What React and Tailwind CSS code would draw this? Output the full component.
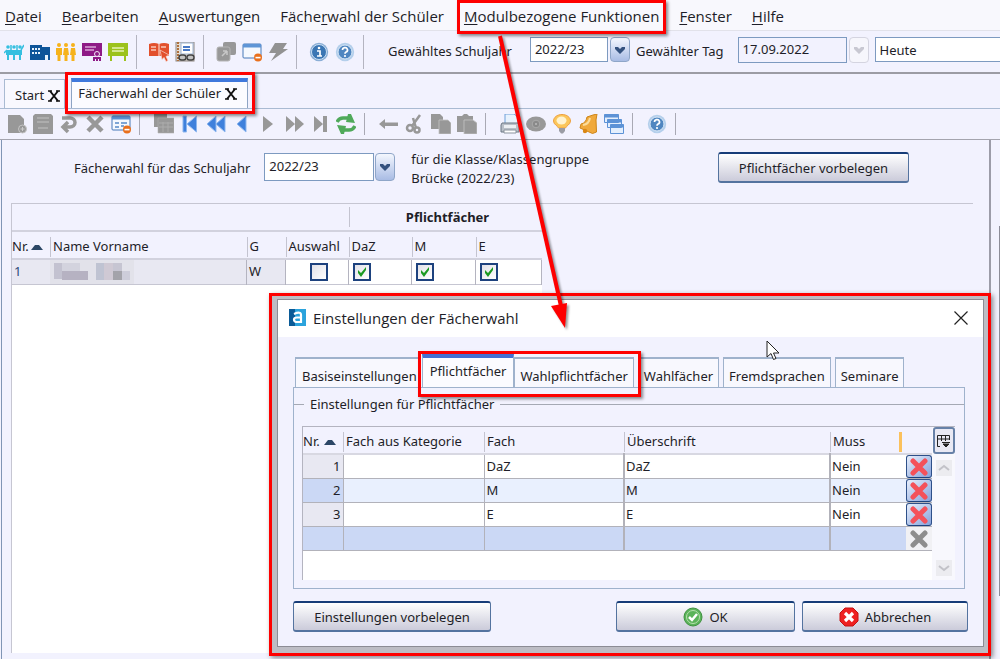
import React, { useState } from "react";

const Icon = ({ children }) => (
  <svg viewBox="0 0 20 20" className="size-5 shrink-0" aria-hidden="true">
    {children}
  </svg>
);

const ToolButton = ({ label, children }) => (
  <button type="button" aria-label={label} className="size-5 shrink-0">
    <Icon>{children}</Icon>
  </button>
);

const windowShape = (
  <g>
    <rect x="1" y="2" width="18" height="14" rx="1" fill="#f4f8fe" stroke="#4678b8" />
    <rect x="1" y="2" width="18" height="3.5" fill="#5f95d6" />
  </g>
);

const minusBadge = (
  <g>
    <circle cx="16" cy="15.5" r="4" fill="#e9701d" />
    <rect x="13.5" y="14.8" width="5" height="1.6" fill="#fff" />
  </g>
);

const helpShape = (
  <g>
    <circle cx="10" cy="10" r="9.2" fill="#b4cfeb" />
    <circle cx="10" cy="10" r="7" fill="#4f86c0" stroke="#d9e8f7" />
    <path d="M7.5 8a2.5 2.4 0 1 1 3.6 2.1q-1.1.6-1.1 1.7" fill="none" stroke="#fff" strokeWidth="1.7" />
    <circle cx="10" cy="14" r="1.1" fill="#fff" />
  </g>
);

const mainTools = [
  [
    ["Schüler", (
      <g fill="#35bfe0">
        <circle cx="4" cy="5" r="1.8" /><circle cx="10" cy="5" r="1.8" /><circle cx="16" cy="5" r="1.8" />
        <path d="M2 8h16v5h-1v5h-2v-5h-4v5H9v-5H5v5H3v-5H2z" />
        <path d="M0 11l3-3M7 8V3M13 8V3M17 8l3-5" stroke="#35bfe0" strokeWidth="1.5" />
      </g>
    )],
    ["Schule", (
      <g>
        <path d="M0 3h12v2h8v13H0z" fill="#0d5499" />
        <path d="M2 6h2v2H2zM5 6h2v2H5zM8 6h2v2H8zM2 10h2v2H2zM5 10h2v2H5zM8 10h2v2H8zM15 13h3v5h-3z" fill="#e6f1fb" />
      </g>
    )],
    ["Klassen", (
      <g fill="#f6b21b">
        <circle cx="3" cy="3" r="2" /><circle cx="10" cy="3" r="2" /><circle cx="17" cy="3" r="2" />
        <path d="M0 6h6v7H4.500v6h-3v-6H0zM8 6h4l1 7h-1.500v6h-3v-6H7zM15 6h4l1 7h-1.500v6h-3v-6H14z" />
      </g>
    )],
    ["Unterricht", (
      <g>
        <path d="M0 1h20v13H0z" fill="#8e1a86" />
        <path d="M3 5h11M3 8h9" stroke="#d9a5d6" strokeWidth="1.3" />
        <circle cx="15" cy="12" r="2.500" fill="#8e1a86" stroke="#f3e6f6" />
        <path d="M11 19v-4h8v4h-2v-2h-1v2h-2v-2h-1v2z" fill="#8e1a86" />
      </g>
    )],
    ["Leistung", (
      <g>
        <path d="M0 1h20v13H0z" fill="#9cc21c" />
        <path d="M4 6h12M4 9h12" stroke="#e6f2b6" strokeWidth="1.4" />
        <path d="M2 14h2v5H2zM16 14h2v5h-2z" fill="#9cc21c" />
      </g>
    )],
  ],
  [
    ["Katalog", (
      <g>
        <path d="M0 2q5-2 10 0 5-2 10 0v12H0z" fill="#e2502c" />
        <path d="M10 2v12M2 5h5M2 8h5M12 5h5" stroke="#f9c7b8" strokeWidth="1.3" />
        <path d="M11 8l9 5-3 1.500 2 4-2 1-2-4-2 2z" fill="#e2502c" stroke="#f8d8ce" strokeWidth=".7" />
      </g>
    )],
    ["Suche", (
      <g>
        <rect x="1" y="0" width="18" height="19" fill="#e4ded6" stroke="#8d8680" />
        <rect x="6" y="1" width="12" height="11" fill="#fff" stroke="#9cb2d2" />
        <path d="M8 5h7M8 8h7" stroke="#4878c5" strokeWidth="2" />
        <path d="M3 0v19" stroke="#b0703c" strokeWidth="2" strokeDasharray="2 1" />
        <rect x="4" y="13" width="7" height="5" rx="2.500" fill="#c4c4c4" stroke="#444" strokeWidth="1.400" />
        <rect x="12" y="13" width="7" height="5" rx="2.500" fill="#c4c4c4" stroke="#444" strokeWidth="1.400" />
      </g>
    )],
  ],
  [
    ["Ansichten", (
      <g fill="#989898">
        <rect x="7" y="0" width="13" height="13" rx="2" />
        <rect x="1" y="5" width="13" height="14" rx="2" stroke="#b4b4b4" />
        <path d="M6 14l5-5m0 0v4m0-4H7" stroke="#c8c8c8" strokeWidth="1.500" fill="none" />
      </g>
    )],
    ["Fenster schließen", <g>{windowShape}{minusBadge}</g>],
    ["Blitz", <path d="M7 1h12l-4 6h5L3 19l5-8H1z" fill="#929292" />],
  ],
  [
    ["Info", (
      <g>
        <circle cx="10" cy="10" r="9.200" fill="#8aaed6" />
        <circle cx="10" cy="10" r="7.500" fill="#3b76b4" stroke="#c9def2" />
        <path d="M8 9h3v5M8 14h5" stroke="#fff" strokeWidth="1.700" fill="none" />
        <circle cx="10" cy="6" r="1.300" fill="#fff" />
      </g>
    )],
    ["Hilfe", helpShape],
  ],
];

const grey = "#989898";
const blue = "#3f80dc";
const blueEdge = "#8db6ee";

const editTools = [
  [
    ["Neu", <g fill={grey}><path d="M1 1h12l4 4v14H1z" /><circle cx="15.500" cy="15" r="4" stroke="#c4c4c4" /><path d="M13.500 15h4M15.500 13v4" stroke="#ccc" /></g>],
    ["Speichern", <g><path d="M2 0h16l2 2v18H0V2z" fill={grey} /><path d="M4 8h12M4 4h12M5 14h10" stroke="#b4b4b4" strokeWidth="1.300" /></g>],
    ["Rückgängig", <path d="M3 4h8a5 4.500 0 0 1 0 9H5M9 8l-5 5 5 5" fill="none" stroke={grey} strokeWidth="3.500" />],
    ["Löschen", <path d="M3 3l14 14M17 3L3 17" stroke={grey} strokeWidth="4.500" />],
    ["Formular", <g>{windowShape}<path d="M4 9h4M4 13h4M10 9h6M10 12h3" stroke="#5689c8" strokeWidth="1.700" />{minusBadge}</g>],
  ],
  [
    ["Tabelle", <g fill={grey}><path d="M0 0h13v13H0z" /><path d="M4 4h16v15H4z" stroke="#b4b4b4" strokeWidth=".6" /><path d="M5 9h14M5 13h14M9 8v10M14 8v10" stroke="#acacac" /></g>],
    ["Erster", <g fill={blue} stroke={blueEdge}><path d="M3 2h3.500v16H3z" /><path d="M16.500 2v16L7 10z" /></g>],
    ["Zurück", <g fill={blue} stroke={blueEdge}><path d="M10 2v16L1 10zM19 2v16l-9-8z" /></g>],
    ["Voriger", <path d="M14 2v16L5 10z" fill={blue} stroke={blueEdge} />],
    ["Nächster", <path d="M5 2v16l10-8z" fill={grey} />],
    ["Weiter", <path d="M2 2v16l9-8zM11 2v16l9-8z" fill={grey} />],
    ["Letzter", <path d="M4 2v16l9-8zM13 2h4v16h-4z" fill={grey} />],
    ["Aktualisieren", (
      <g fill="none" stroke="#4fa95a" strokeWidth="3.500">
        <path d="M1 8q2-4 6-4h6" />
        <path d="M19 12q-2 4-6 4H7" />
        <path d="M12 0h3l4 9-9-1zM8 20H5l-4-9 9 1z" fill="#4fa95a" stroke="none" />
      </g>
    )],
  ],
  [
    ["Pfeil", <path d="M0 10l6-5v3.500h13v3.500H6v3z" fill={grey} />],
    ["Ausschneiden", <g fill="none" stroke={grey} strokeWidth="2.500"><circle cx="5" cy="14" r="3" /><circle cx="12" cy="16" r="2.500" /><path d="M7 12l8-11M11 14L8 4" /></g>],
    ["Kopieren", <g fill={grey}><path d="M0 0h9l3 3v12H0z" /><path d="M8 6h9l3 3v11H8z" stroke="#c4c4c4" strokeWidth=".8" /></g>],
    ["Einfügen", <g fill={grey}><path d="M0 2h5l2-2h3l2 2h4v16H0z" /><path d="M7 6h9l4 3v11H7z" stroke="#c4c4c4" strokeWidth=".8" /></g>],
  ],
  [
    ["Drucken", (
      <g>
        <path d="M5 0h9l4 3v7H5z" fill="#e8f2fd" stroke="#6fa0da" />
        <path d="M2 9h16l1 2v7H1v-7z" fill="#b9bfc8" stroke="#6d7885" />
        <path d="M4 11h12v3H4z" fill="#eceff3" />
        <path d="M4 16h12v3H4z" fill="#fff" stroke="#8b939d" />
      </g>
    )],
    ["Vorschau", <g><ellipse cx="10" cy="10" rx="10" ry="7.500" fill={grey} /><circle cx="10" cy="10" r="3.800" fill="#8a8a8a" stroke="#aaa" /><circle cx="10" cy="10" r="1" fill="#bbb" /></g>],
    ["Tipp", <g><path d="M10 .5c5 0 8.500 3 8.500 6.500S14 12 13.500 14h-7C6 12 1.500 10.500 1.500 7S5 .5 10 .5z" fill="#fbc65a" stroke="#eea040" /><ellipse cx="9.500" cy="6.500" rx="5" ry="4" fill="#fff3cf" /><path d="M7 14h6v3l-2 2.500H9L7 17z" fill="#9a9ca4" /></g>],
    ["Meldung", <g><path d="M9 3l6-2 4-1-1 6 .5 12-4 1.500L2 14l1-4q5-1 6-7z" fill="#f0a93c" stroke="#cd8518" /><path d="M5 11q6-1 7-7" stroke="#fbdc9a" strokeWidth="2" fill="none" /><circle cx="7" cy="17" r="2.200" fill="#d98714" /></g>],
    ["Fensterliste", <g fill="#e4effd" stroke="#5d92d6"><path d="M.5.5h14v8H.5zM3.500 5.500h14v8h-14zM6.500 10.500h13v9h-13z" /><path d="M.5 2h14M3.500 7h14M6.500 12h13" strokeWidth="3" /></g>],
  ],
  [["Hilfe", helpShape]],
];

const menus = [
  ["D", "atei"],
  ["B", "earbeiten"],
  ["A", "uswertungen"],
  ["Fäche", "r", "wahl der Schüler"],
  ["M", "odulbezogene Funktionen"],
  ["F", "enster"],
  ["H", "ilfe"],
];

const Chevron = ({ disabled, label }) => (
  <button
    type="button"
    aria-label={label}
    disabled={disabled}
    className={
      disabled
        ? "flex w-5 items-center justify-center rounded-sm border border-[#d4d4e0] bg-[#f6f6fc] text-[#c8c8d2]"
        : "flex w-5 items-center justify-center rounded-sm border border-[#8fa6c8] bg-gradient-to-b from-[#f4f7fe] to-[#a9bce4] text-[#34527f]"
    }
  >
    <svg viewBox="0 0 12 10" className="h-2.5 w-3">
      <path d="M1 2h3l2 2 2-2h3v2L6 9 1 4z" fill="currentColor" />
    </svg>
  </button>
);

const Check = ({ label, initial }) => {
  const [on, setOn] = useState(initial);
  return (
    <span className="relative block size-[18px]">
      <input
        type="checkbox"
        aria-label={label}
        checked={on}
        onChange={(e) => setOn(e.target.checked)}
        className="block size-[18px] appearance-none border-2 border-[#1d427e] bg-gradient-to-br from-[#e2e2e8] to-white"
      />
      {on && (
        <svg viewBox="0 0 18 18" className="pointer-events-none absolute inset-0 size-[18px]">
          <path d="M5 7v3l3 4 5-7V4L8 10z" fill="#1c9a22" />
        </svg>
      )}
    </span>
  );
};

const PushButton = ({ className, children }) => (
  <button
    type="button"
    className={`flex h-[31px] items-center justify-center gap-1.5 rounded-[3px] border border-t-2 border-b-2 border-[#54739f] border-t-[#173d78] bg-gradient-to-b from-white to-[#cbcbda] leading-5 ${className}`}
  >
    {children}
  </button>
);

// red marker frame laid over the thing it points out
const Marker = ({ className }) => (
  <span className={`pointer-events-none absolute z-20 border-[3px] border-[#fe0000] shadow-[2px_2px_3px_rgba(0,0,0,0.45)] ${className}`} />
);

const SortUp = () => (
  <svg viewBox="0 0 12 6" className="h-1.5 w-3 shrink-0">
    <path d="M0 6L4 1h4l4 5z" fill="#2c4766" />
  </svg>
);

const Cross = ({ color }) => (
  <svg viewBox="0 0 18 18" className="size-[18px]">
    <path d="M3 3l12 12M15 3L3 15" stroke={color} strokeWidth="5" strokeLinecap="round" />
  </svg>
);

const TabClose = () => (
  <svg viewBox="0 0 12 12" className="size-3">
    <path d="M2 1l8 10M10 1L2 11" stroke="#111" strokeWidth="2" />
    <path d="M0 1h4M8 1h4M0 11h4M8 11h4" stroke="#111" strokeWidth="1.4" />
  </svg>
);

const Mosaic = () => (
  <svg viewBox="0 0 84 24" className="block h-6 w-[84px]">
    <rect width="84" height="24" fill="#e2e2ea" />
    <rect x="4" y="3" width="8" height="16" fill="#c3c2d0" />
    <rect x="12" y="3" width="18" height="8" fill="#d3d3de" />
    <rect x="12" y="11" width="26" height="9" fill="#b6b2c2" />
    <rect x="46" y="3" width="8" height="17" fill="#bfc3d2" />
    <rect x="54" y="3" width="9" height="17" fill="#cfc9d4" />
    <rect x="63" y="3" width="9" height="8" fill="#c6c5d2" />
    <rect x="63" y="11" width="9" height="9" fill="#a3a3aa" />
    <rect x="72" y="11" width="8" height="9" fill="#cdcdda" />
  </svg>
);

const rows = [
  { nr: 1, name: "DaZ", muss: "Nein", bg: "bg-white", nrBg: "bg-[#e8e8f2]" },
  { nr: 2, name: "M", muss: "Nein", bg: "bg-[#e9f0fe]", nrBg: "bg-[#cbd8f5]" },
  { nr: 3, name: "E", muss: "Nein", bg: "bg-white", nrBg: "bg-[#e8e8f2]" },
  { nr: "", name: "", muss: "", bg: "bg-[#cbd8f5]", nrBg: "bg-[#cbd8f5]" },
];

const dialogTabs = ["Basiseinstellungen", "Pflichtfächer", "Wahlpflichtfächer", "Wahlfächer", "Fremdsprachen", "Seminare"];

const Th = ({ children }) => (
  <th className="p-0 pt-1 text-left font-normal">
    <div className="flex h-5 items-center gap-1 border-l border-[#c4c4d0] pl-0.5 whitespace-nowrap">{children}</div>
  </th>
);

const Dialog = () => {
  const [tab, setTab] = useState("Pflichtfächer");
  return (
    <section
      role="dialog"
      aria-label="Einstellungen der Fächerwahl"
      className="absolute top-[293px] right-[9px] left-[269px] z-10 border-[3px] border-[#fe0000] bg-[#bdbdc4] pt-[3px] pr-1 pb-1.5 pl-[5px] shadow-[2px_2px_5px_rgba(0,0,0,0.45)]"
    >
      <div className="border border-[#8c8c94] bg-[#f2f2fe]">
        <header className="flex h-[37px] items-center bg-white pr-[15px] pb-0.5 pl-[11px]">
          <svg viewBox="0 0 17 17" className="size-[17px]">
            <rect width="17" height="17" fill="#2ba3dc" />
            <rect width="6" height="17" fill="#0b5b97" />
            <path d="M5 5q7-3 7 1v7H7q-2-.5-2-2.500 0-2 3-2h4" fill="none" stroke="#fff" strokeWidth="2.200" />
          </svg>
          <h2 className="ml-[7px] flex-1 font-['Open_Sans',sans-serif] text-[15px] leading-5">Einstellungen der Fächerwahl</h2>
          <button type="button" aria-label="Schließen">
            <svg viewBox="0 0 14 14" className="size-3.5">
              <path d="M.5.5l13 13M13.500.5l-13 13" stroke="#222" strokeWidth="1.200" />
            </svg>
          </button>
        </header>

        <div className="pt-[17px] pr-[18px] pb-3.5 pl-[15px]">
          <div className="flex items-end gap-1" role="tablist">
            {dialogTabs.map((t) => (
              <button
                key={t}
                type="button"
                role="tab"
                aria-selected={t === tab}
                onClick={() => setTab(t)}
                className={
                  t === tab
                    ? "-mr-1 -ml-0.5 h-[33px] border border-t-4 border-b-0 border-[#9fb2cc] border-t-[#4470d2] bg-[#fbfbff] px-[7px] pb-1 leading-5"
                    : "h-[30px] border border-t-2 border-b-0 border-[#9fb2cc] bg-[#f8f8fe] px-[5px] pt-1.5 leading-5 first:ml-0.5 first:pr-0.5 first:pl-1.5"
                }
              >
                {t}
              </button>
            ))}
          </div>

          <div className="border border-[#9fb2cc] pt-1.5 pb-2">
            <fieldset className="border-t border-[#a5a9b4] pr-[9px] pl-2">
              <legend className="ml-0.5 px-1.5 leading-5">Einstellungen für Pflichtfächer</legend>
              <div className="mt-3 flex h-[154px] border-t border-l border-[#b4b4c0] bg-white">
                <table className="h-fit flex-1 table-fixed border-collapse">
                  <colgroup>
                    <col className="w-10" />
                    <col className="w-[141px]" />
                    <col className="w-[140px]" />
                    <col />
                    <col className="w-[76px]" />
                    <col className="w-[26px]" />
                  </colgroup>
                  <thead>
                    <tr className="h-[27px] border-b-2 border-[#d8d8e2] bg-[#f2f2fe]">
                      <th className="p-0 pt-1 font-normal">
                        <div className="flex items-center gap-1">Nr. <SortUp /></div>
                      </th>
                      <Th>Fach aus Kategorie</Th>
                      <Th>Fach</Th>
                      <Th>Überschrift</Th>
                      <Th>Muss<i className="mr-1 ml-auto h-5 w-[3px] bg-[#fbc15c]" /></Th>
                      <th aria-label="Löschen" />
                    </tr>
                  </thead>
                  <tbody>
                    {rows.map((r, i) => (
                      <tr key={i} className={`h-6 border-b border-[#b2b2ba] ${r.bg}`}>
                        <td className={`p-0 pr-0.5 text-right ${r.nrBg}`}>{r.nr}</td>
                        <td className="border-l border-[#b2b2ba] p-0" />
                        <td className="border-l border-[#b2b2ba] p-0 pl-0.5">{r.name}</td>
                        <td className="border-l-2 border-[#b2b2ba] p-0 pl-px">{r.name}</td>
                        <td className="border-l-2 border-[#b2b2ba] p-0 pl-px">{r.muss}</td>
                        <td className="p-0">
                          {r.nr ? (
                            <button type="button" aria-label={`Zeile ${r.nr} löschen`} className="flex h-[23px] w-full items-center justify-center rounded-[3px] border border-[#2e5089] border-b-[#1d427e] bg-gradient-to-br from-[#e8effc] to-[#86a2da]">
                              <Cross color="#f4515a" />
                            </button>
                          ) : (
                            <button type="button" disabled aria-label="Leere Zeile" className="flex h-[23px] w-full items-center justify-center bg-[#f1f1f4]">
                              <Cross color="#8d8d8d" />
                            </button>
                          )}
                        </td>
                      </tr>
                    ))}
                  </tbody>
                </table>
                <div className="flex w-[23px] flex-col items-center justify-between bg-[#f8f8fd]">
                  <button type="button" aria-label="Spalten" className="flex h-[27px] w-[22px] items-center justify-center rounded-[3px] border-2 border-[#6781a8] bg-[#e9e9f4]">
                    <svg viewBox="0 0 14 14" className="size-3.5" fill="none" stroke="#222">
                      <path d="M3 12.500H.5V1.500h12V6M.5 5h12M4.500 1v6M8.500 1v6" />
                      <path d="M5 8.500h8M6 10h6l-3 3z" fill="#222" />
                    </svg>
                  </button>
                  <span className="mt-1.5 mb-auto flex size-4 items-center justify-center bg-[#ececf0]">
                    <svg viewBox="0 0 12 8" className="h-2 w-3"><path d="M1 6l5-4 5 4" fill="none" stroke="#c2c2c8" strokeWidth="2" /></svg>
                  </span>
                  <span className="mb-1 flex size-4 items-center justify-center bg-[#ececf0]">
                    <svg viewBox="0 0 12 8" className="h-2 w-3"><path d="M1 2l5 4 5-4" fill="none" stroke="#c2c2c8" strokeWidth="2" /></svg>
                  </span>
                </div>
              </div>
            </fieldset>
          </div>

          <footer className="mt-3 -mr-[3px] flex">
            <PushButton className="w-[198px]">Einstellungen vorbelegen</PushButton>
            <PushButton className="ml-auto w-[179px]">
              <svg viewBox="0 0 20 20" className="size-5">
                <circle cx="10" cy="10" r="9" fill="#5bb35a" stroke="#3f9140" />
                <circle cx="10" cy="10" r="6.500" fill="none" stroke="#b7dfae" />
                <path d="M6 10l3 3 5-6" fill="none" stroke="#fff" strokeWidth="2.500" />
              </svg>
              OK
            </PushButton>
            <PushButton className="ml-[7px] w-[166px]">
              <svg viewBox="0 0 20 20" className="size-5">
                <path d="M6 1h8l5 5v8l-5 5H6l-5-5V6z" fill="#ee2020" stroke="#c41212" />
                <path d="M6 6l8 8M14 6l-8 8" stroke="#fff" strokeWidth="3.200" />
              </svg>
              Abbrechen
            </PushButton>
          </footer>
        </div>
      </div>
      <Marker className="top-[55px] left-[146px] h-[46px] w-[223px]" />
    </section>
  );
};

const Toolbar = ({ groups, sep }) =>
  groups.map((group, i) => (
    <React.Fragment key={i}>
      {group.map(([label, art]) => (
        <ToolButton key={label} label={label}>{art}</ToolButton>
      ))}
      <span className={sep} />
    </React.Fragment>
  ));

const App = () => {
  return (
    <div className="relative flex min-h-screen flex-col overflow-hidden bg-[#f2f2fe] font-['Noto_Sans',sans-serif] text-[13px] text-[#1e1e28]">
      <nav className="flex h-[31px] items-center gap-5 border-b border-[#e2e2ea] bg-[#f8f8fd] pt-0.5 pl-[5px] font-['Open_Sans',sans-serif] text-[15px] leading-5 whitespace-nowrap">
        {menus.map(([a, b, c]) => (
          <button type="button" key={a} className="relative">
            {c ? <>{a}<u className="underline-offset-2">{b}</u>{c}</> : <><u className="underline-offset-2">{a}</u>{b}</>}
            {a === "M" && <Marker className="-inset-x-[7px] -top-1.5 -bottom-2" />}
          </button>
        ))}
      </nav>

      <div className="flex h-[43px] items-center gap-1.5 border-b-2 border-[#9c9ca4] pl-1 whitespace-nowrap">
        <Toolbar groups={mainTools} sep="ml-0.5 mr-1.5 h-[34px] w-px shrink-0 bg-[#b4b4c0]" />
        <label htmlFor="jahr" className="ml-3">Gewähltes Schuljahr</label>
        <div className="-mt-1 ml-3 flex h-[25px] gap-0.5">
          <select id="jahr" className="w-[78px] appearance-none border border-[#7d9ac0] bg-white pl-1">
            <option>2022/23</option>
          </select>
          <Chevron label="Schuljahr öffnen" />
        </div>
        <label htmlFor="tag">Gewählter Tag</label>
        <div className="-mt-1 ml-2 flex h-[26px] gap-0.5">
          <input id="tag" defaultValue="17.09.2022" className="w-[109px] border border-[#7d9ac0] bg-[#f2f2fe] pl-1" />
          <Chevron disabled label="Tag öffnen" />
        </div>
        <input aria-label="Tag" defaultValue="Heute" className="-mt-1 h-[25px] min-w-0 flex-1 border border-r-0 border-[#7d9ac0] bg-white pl-1" />
      </div>

      <div className="flex h-[35px] items-end gap-1.5 border-b border-[#a9bad2] pl-1">
        <button type="button" className="flex h-[29px] items-center gap-1 border border-b-0 border-[#a9bad2] bg-[#f8f8fe] pt-1 pr-1 pl-2.5">
          Start <TabClose />
        </button>
        <button type="button" className="relative flex h-[30px] items-center gap-1 border border-t-4 border-b-0 border-[#8ea4c4] border-t-[#3f78dc] bg-[#fbfbff] pr-2.5 pb-0.5 pl-1.5">
          Fächerwahl der Schüler <TabClose />
          <Marker className="-top-[10px] -right-2 -bottom-1.5 -left-[7px]" />
        </button>
      </div>

      <div className="flex h-[31px] items-center gap-1.5 border-b border-[#a4a4ae] pl-[7px]">
        <Toolbar groups={editTools} sep="ml-0.5 mr-2 h-[22px] w-px shrink-0 bg-[#a9a9b4]" />
      </div>

      <div className="flex flex-1">
        <main className="ml-px flex flex-1 flex-col border-r-2 border-l border-[#9c9ca8] border-l-[#8095b5] pr-4 pl-[9px]">
          <div className="flex items-start pt-3">
            <label htmlFor="fjahr" className="pt-1.5 pl-[63px] leading-5">Fächerwahl für das Schuljahr</label>
            <div className="mt-px ml-3.5 flex h-7 gap-px">
              <select id="fjahr" className="w-[110px] appearance-none border border-[#7d9ac0] bg-white pl-1">
                <option>2022/23</option>
              </select>
              <Chevron label="Schuljahr der Fächerwahl öffnen" />
            </div>
            <p className="-mt-0.5 ml-4 leading-[19px]">
              für die Klasse/Klassengruppe
              <br />
              Brücke (2022/23)
            </p>
            <PushButton className="mr-16 ml-auto w-[191px]">Pflichtfächer vorbelegen</PushButton>
          </div>

          <div className="mt-[15px] mb-1.5 flex-1 border-t border-l border-[#c6c6d2]">
            <div className="flex h-full w-[530px] flex-col bg-white">
              <table className="w-full table-fixed border-collapse">
                <colgroup>
                  <col className="w-[38px]" />
                  <col />
                  <col className="w-[39px]" />
                  <col className="w-[63px]" />
                  <col className="w-[63px]" />
                  <col className="w-16" />
                  <col className="w-[66px]" />
                </colgroup>
                <thead className="bg-[#f2f2fe]">
                  <tr className="h-[27px] border-b-2 border-[#d2d2de]">
                    <th colSpan={4} className="p-0" />
                    <th colSpan={3} className="p-0 leading-5">
                      <div className="border-l border-[#c4c4d0] pl-1">Pflichtfächer</div>
                    </th>
                  </tr>
                  <tr className="h-7 border-b-2 border-[#d2d2de]">
                    <th className="p-0 pt-1 font-normal"><div className="flex items-center gap-0.5">Nr. <SortUp /></div></th>
                    <Th>Name Vorname</Th>
                    <Th>G</Th>
                    <Th>Auswahl</Th>
                    <Th>DaZ</Th>
                    <Th>M</Th>
                    <Th>E</Th>
                  </tr>
                </thead>
                <tbody>
                  <tr className="h-6 border-b border-[#c6c6d2]">
                    <td className="bg-[#e8e8f2] p-0 pl-0.5 text-[#2c4a78]">1</td>
                    <td className="bg-[#e8e8f2] p-0"><Mosaic /></td>
                    <td className="border-x border-[#b4b4c0] bg-[#e8e8f2] p-0 pl-0.5">W</td>
                    <td className="p-0 pl-6"><Check label="Auswahl" initial={false} /></td>
                    {["DaZ", "M", "E"].map((f) => (
                      <td key={f} className="border-x border-[#b4b4c0] p-0 pl-1"><Check label={f} initial /></td>
                    ))}
                  </tr>
                </tbody>
              </table>
            </div>
          </div>
        </main>
        <aside className="w-[9px] pt-[86px] pl-2">
          <div className="h-[370px] border-t border-l border-[#8c8c98] bg-white" />
        </aside>
      </div>

      <Dialog />

      <svg viewBox="0 0 90 310" className="pointer-events-none absolute top-[34px] left-[490px] z-30 h-[310px] w-[90px] drop-shadow-[2px_2px_1px_rgba(0,0,0,0.4)]">
        <path d="M10 2L71 272" stroke="#fe0000" strokeWidth="4" />
        <path d="M61 272l16-3 -2 25z" fill="#fe0000" />
      </svg>

      <svg viewBox="0 0 14 22" className="pointer-events-none absolute top-[340px] left-[766px] z-30 h-[22px] w-3.5">
        <path d="M1 1v16l4-3.500 2.500 6 2.500-1-2.500-5.500H13z" fill="#fff" stroke="#222" />
      </svg>
    </div>
  );
};

export default App;
